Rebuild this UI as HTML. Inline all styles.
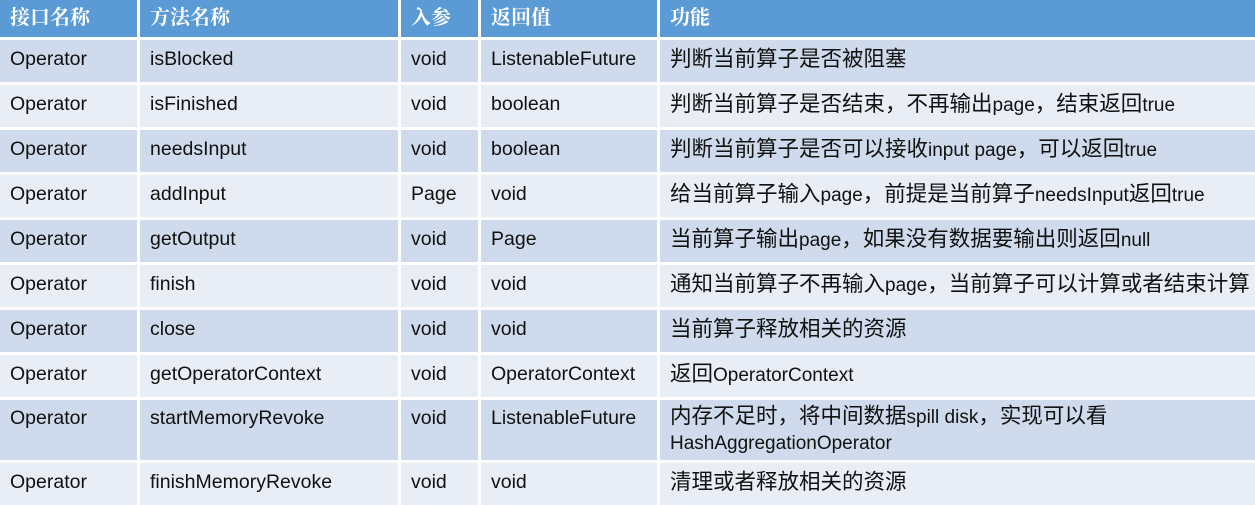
<!DOCTYPE html>
<html><head><meta charset="utf-8"><style>
body{margin:0;width:1255px;height:505px;background:#fff;overflow:hidden;position:relative;font-family:"Liberation Sans","Noto Sans CJK SC",sans-serif;}
.c{position:absolute;box-sizing:border-box;padding-left:10px;font-size:19.5px;color:#111;line-height:25px;display:flex;align-items:center;white-space:nowrap;}
.h{background:#5b9bd5;color:#fff;font-weight:bold;font-size:20px;font-family:"Liberation Sans","Noto Serif CJK SC",serif;}
.o{background:#cfdbec}.e{background:#e9eef6}
.z{font-size:21.5px}
.z span{font-size:19px}
</style></head><body>
<script>
const cols=[[0,137],[140,398],[401,478],[481,657],[660,1255]];
const rows=[
["接口名称","方法名称","入参","返回值","功能"],
["Operator","isBlocked","void","ListenableFuture","判断当前算子是否被阻塞"],
["Operator","isFinished","void","boolean","判断当前算子是否结束，不再输出page，结束返回true"],
["Operator","needsInput","void","boolean","判断当前算子是否可以接收input page，可以返回true"],
["Operator","addInput","Page","void","给当前算子输入page，前提是当前算子needsInput返回true"],
["Operator","getOutput","void","Page","当前算子输出page，如果没有数据要输出则返回null"],
["Operator","finish","void","void","通知当前算子不再输入page，当前算子可以计算或者结束计算"],
["Operator","close","void","void","当前算子释放相关的资源"],
["Operator","getOperatorContext","void","OperatorContext","返回OperatorContext"],
["Operator","startMemoryRevoke","void","ListenableFuture","内存不足时，将中间数据spill disk，实现可以看|HashAggregationOperator"],
["Operator","finishMemoryRevoke","void","void","清理或者释放相关的资源"]];
const ys=[[0,37],[40,82],[85,127],[130,172],[175,217],[220,262],[265,307],[310,352],[355,397],[400,460],[463,505]];
let h="";
rows.forEach((r,i)=>{const [y0,y1]=ys[i];const cls=i==0?"h":(i%2?"o":"e");
r.forEach((t,j)=>{const [x0,x1]=cols[j];
let al=(i==9&&j<4)?"align-items:flex-start;padding-top:6px;":"";
let pb=(i>0&&i!=9)?"padding-bottom:3px;":"";
let z="";
if(j==4&&i>0){z=" z";t=t.replace(/[ -~]+/g,m=>"<span>"+m+"</span>").replace("<span>|","<br><span>");}
h+=`<div class="c ${cls}${z}" style="left:${x0}px;top:${y0}px;width:${x1-x0}px;height:${y1-y0}px;${al}${pb}"><div>${t}</div></div>`;});});
document.write(h);
</script>
</body></html>
